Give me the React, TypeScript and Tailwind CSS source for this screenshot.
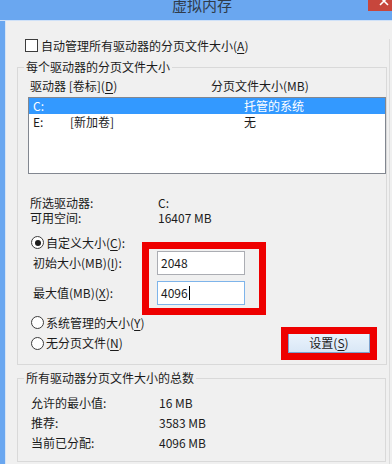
import type { ReactNode } from 'react';

function Key({ k }: { k: string }) {
  return (
    <>
      (<span className="underline decoration-1 underline-offset-[2px]">{k}</span>)
    </>
  );
}

function Radio({ checked }: { checked?: boolean }) {
  return (
    <span className="flex h-[13px] w-[13px] shrink-0 items-center justify-center rounded-full border border-[#3c3c3c] bg-white">
      {checked && <span className="h-[6px] w-[6px] rounded-full bg-[#1b1b1b]" />}
    </span>
  );
}

function InfoRow({ label, value, h }: { label: string; value: string; h: string }) {
  return (
    <div className={`flex items-center ${h}`}>
      <span className="w-[128px]">{label}</span>
      <span>{value}</span>
    </div>
  );
}

function Field({ label, value, focused, caret }: { label: ReactNode; value: string; focused?: boolean; caret?: boolean }) {
  return (
    <div className="flex h-[24px] items-center pl-[9px]">
      <span className="w-[124px]">{label}</span>
      <div
        className={`flex h-[24px] w-[88px] items-center border bg-white pl-[3px] ${
          focused ? 'border-[#7eb4ea]' : 'border-[#abadb3]'
        }`}
      >
        {value}
        {caret && <span className="ml-px inline-block h-[14px] w-px bg-black" />}
      </div>
    </div>
  );
}

export default function App() {
  return (
    <div className="h-[464px] w-[392px] overflow-hidden bg-[#6aa7f0] font-['Noto_Sans_CJK_SC','Noto_Sans',sans-serif] text-[12px] leading-[14px] text-[#1b1b1b]">
      <div className="relative w-[404px]">
        {/* title bar */}
        <div className="flex h-[21px] justify-center border-b border-[#cfe1f8]">
          <span className="-mt-[3px] text-[15px] leading-[15px] text-[#2f3b4a]">虚拟内存</span>
        </div>
        <div className="absolute left-[368px] top-0 h-[11px] w-[32px] overflow-hidden bg-[#c7463c]">
          <svg className="absolute left-[11px] -top-[4px]" width="10" height="10" viewBox="0 0 10 10">
            <path d="M1 1L9 9M9 1L1 9" stroke="#fff" strokeWidth="1.6" />
          </svg>
        </div>

        {/* body */}
        <div className="flex h-[443px] pl-[5px]">
          <div className="flex-1 border-l border-[#d6e4f5] bg-[#f0f0f0]">
            <div className="h-full w-[384px] border-r border-[#dcdcdc]">
              <div className="mt-[18px] flex h-[13px] items-center gap-[3px] pl-[19px]">
                <span className="h-[13px] w-[13px] border border-[#3c3c3c] bg-white" />
                <span>
                  自动管理所有驱动器的分页文件大小<Key k="A" />
                </span>
              </div>

              {/* per-drive group */}
              <fieldset className="ml-[11px] mt-[8px] w-[369px] border border-[#d9d9d9] pb-[11px] pl-[6px]">
                <legend className="px-[2px] leading-[14px]">每个驱动器的分页文件大小</legend>
                <div className="mt-[5px] flex h-[14px] items-center pl-[6px]">
                  <span className="w-[181px]">
                    驱动器 [卷标]<Key k="D" />
                  </span>
                  <span>分页文件大小(MB)</span>
                </div>
                <div className="ml-[4px] mt-[4px] h-[77px] w-[358px] border border-[#828790] bg-white">
                  <div className="flex h-[16px] items-center bg-[#3399ff] pl-[4px] text-white">
                    <span className="w-[37px]">C:</span>
                    <span className="w-[174px]" />
                    <span>托管的系统</span>
                  </div>
                  <div className="flex h-[16px] items-center pl-[4px]">
                    <span className="w-[37px]">E:</span>
                    <span className="w-[174px]">[新加卷]</span>
                    <span>无</span>
                  </div>
                </div>

                <div className="mt-[21px] pl-[6px]">
                  <InfoRow h="h-[15px]" label="所选驱动器:" value="C:" />
                  <InfoRow h="h-[15px]" label="可用空间:" value="16407 MB" />
                </div>

                <div className="mt-[11px] flex h-[13px] items-center gap-[2px] pl-[7px]">
                  <Radio checked />
                  <span>
                    自定义大小<Key k="C" />:
                  </span>
                </div>

                <div className="relative mt-[2px]">
                  <Field label={<>初始大小(MB)<Key k="I" />:</>} value="2048" />
                  <div className="mt-[6px]">
                    <Field label={<>最大值(MB)<Key k="X" />:</>} value="4096" focused caret />
                  </div>
                  <div className="pointer-events-none absolute -top-[9px] left-[118px] h-[73px] w-[124px] border-[7px] border-[#ee0000]" />
                </div>

                <div className="mt-[11px] flex h-[13px] items-center gap-[2px] pl-[7px]">
                  <Radio />
                  <span>
                    系统管理的大小<Key k="Y" />
                  </span>
                </div>

                <div className="mt-[4px] flex h-[20px] items-center justify-between">
                  <div className="flex items-center gap-[2px] pl-[7px]">
                    <Radio />
                    <span>
                      无分页文件<Key k="N" />
                    </span>
                  </div>
                  <div className="relative mr-[16px]">
                    <button className="flex h-[20px] w-[82px] items-center justify-center border border-[#7da2ce] bg-gradient-to-b from-[#eaf3fc] to-[#d9e7f6] text-[12px] leading-[14px]">
                      设置<Key k="S" />
                    </button>
                    <div className="pointer-events-none absolute -left-[7px] -top-[6px] h-[33px] w-[96px] border-[7px] border-[#ee0000]" />
                  </div>
                </div>
              </fieldset>

              {/* totals group */}
              <fieldset className="ml-[11px] mt-[6px] w-[369px] border border-[#d9d9d9] pb-[8px] pl-[6px]">
                <legend className="px-[2px] leading-[14px]">所有驱动器分页文件大小的总数</legend>
                <div className="mt-[8px] pl-[7px]">
                  <InfoRow h="h-[20px]" label="允许的最小值:" value="16 MB" />
                  <InfoRow h="h-[20px]" label="推荐:" value="3583 MB" />
                  <InfoRow h="h-[20px]" label="当前已分配:" value="4096 MB" />
                </div>
              </fieldset>
            </div>
          </div>
        </div>
      </div>
    </div>
  );
}
